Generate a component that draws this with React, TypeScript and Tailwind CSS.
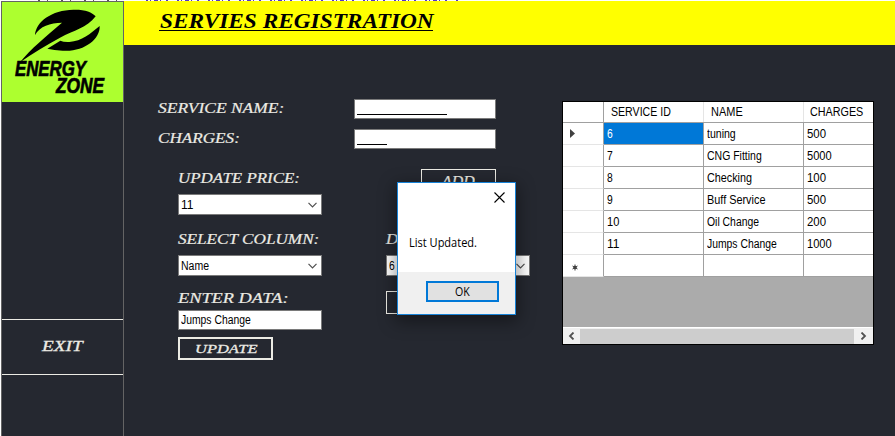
import { useLayoutEffect, useRef, type ReactNode } from "react";

/* Single line of text stretched horizontally to a fixed width. */
function Fit({ w, className = "", children }: { w: number; className?: string; children: ReactNode }) {
  const ref = useRef<HTMLSpanElement>(null);
  useLayoutEffect(() => {
    const el = ref.current;
    if (el) el.style.transform = `scaleX(${w / el.offsetWidth})`;
  }, [w]);
  return (
    <span className="block shrink-0" style={{ width: w }}>
      <span ref={ref} className={`block w-max origin-left whitespace-nowrap ${className}`}>
        {children}
      </span>
    </span>
  );
}

const serif = "font-['Liberation_Serif',serif] italic text-[14px] leading-[16px] text-[#ecebe4] [-webkit-text-stroke:0.2px_#ecebe4]";
const sans = "font-['Liberation_Sans',sans-serif] text-[12px] leading-[14px]";
const dialogFont = "font-['Open_Sans',sans-serif] text-[12px] leading-[16px] text-black";

function Chevron() {
  return (
    <svg className="mr-1 h-[6px] w-[9px]" viewBox="0 0 9 6" fill="none" stroke="#505050" strokeWidth="1.2">
      <path d="M0.5 0.8 4.5 4.8 8.5 0.8" />
    </svg>
  );
}

function Select({ value, w }: { value: string; w: number }) {
  return (
    <div className="flex h-[21px] w-[144px] items-center justify-between border border-[#7a7a7a] bg-white pl-[2px]">
      <Fit w={w} className={sans}>{value}</Fit>
      <Chevron />
    </div>
  );
}

const rows: [string, number, string, number, string, number][] = [
  ["6", 6, "tuning", 29, "500", 19],
  ["7", 6, "CNG Fitting", 55, "5000", 25],
  ["8", 6, "Checking", 45, "100", 19],
  ["9", 6, "Buff Service", 58, "500", 19],
  ["10", 12, "Oil Change", 52, "200", 19],
  ["11", 12, "Jumps Change", 70, "1000", 25],
];

function Logo() {
  return (
    <div className="relative h-[100px] bg-[#adff2f]">
      <svg className="absolute top-0 left-0 h-[100px] w-[121px]" viewBox="6 6 363 300">
        <path d="M105 105C108 65 155 30 220 29C254 28 276 36 287 49C260 84 222 91 180 113C139 135 98 160 60 187C91 147 139 109 186 68C150 69 120 78 105 105Z" />
        <path d="M299 78C301 119 249 157 188 152Q162 151 142 146L181 122Q191 127 208 126C246 123 271 101 299 78Z" />
      </svg>
      <div className="absolute top-[58px] left-[13px]">
        <Fit w={71} className="font-['Liberation_Sans',sans-serif] text-[22px] leading-[17px] font-bold italic [-webkit-text-stroke:0.7px_black]">ENERGY</Fit>
      </div>
      <div className="absolute top-[75px] left-[54px]">
        <Fit w={48} className="font-['Liberation_Sans',sans-serif] text-[22px] leading-[17px] font-bold italic [-webkit-text-stroke:0.7px_black]">ZONE</Fit>
      </div>
    </div>
  );
}

function Sidebar() {
  return (
    <aside className="flex w-[123px] shrink-0 flex-col border-x border-t border-[#646464]">
      <Logo />
      <div className="mt-[217px] flex h-[56px] items-center justify-center border-y border-[#ecebe4] pb-[2px]">
        <Fit w={41} className="font-['Liberation_Serif',serif] text-[15px] leading-[18px] italic text-[#ecebe4] [-webkit-text-stroke:0.3px_#ecebe4]">EXIT</Fit>
      </div>
    </aside>
  );
}

function Form() {
  return (
    <section className="w-[438px] pt-[54px] pl-[34px]">
      <div className="flex h-[20px] items-center">
        <div className="w-[196px]"><Fit w={126} className={serif}>SERVICE NAME:</Fit></div>
        <div className="flex h-[20px] w-[142px] items-end border border-[#7a7a7a] bg-white pb-[3px] pl-[2px]">
          <i className="h-px w-[90px] bg-black" />
        </div>
      </div>
      <div className="mt-[10px] flex h-[20px] items-center">
        <div className="w-[196px]"><Fit w={82} className={serif}>CHARGES:</Fit></div>
        <div className="flex h-[20px] w-[142px] items-end border border-[#7a7a7a] bg-white pb-[3px] pl-[2px]">
          <i className="h-px w-[30px] bg-black" />
        </div>
      </div>
      <div className="ml-[20px] flex">
        <div className="w-[208px] pt-[22px]">
          <Fit w={122} className={serif}>UPDATE PRICE:</Fit>
          <div className="mt-[7px]"><Select value="11" w={12} /></div>
          <div className="mt-[17px]"><Fit w={141} className={serif}>SELECT COLUMN:</Fit></div>
          <div className="mt-[7px]"><Select value="Name" w={28} /></div>
          <div className="mt-[15px]"><Fit w={110} className={serif}>ENTER DATA:</Fit></div>
          <div className="mt-[3px] flex h-[20px] w-[144px] items-center border border-[#7a7a7a] bg-white pl-[2px]">
            <Fit w={70} className={sans}>Jumps Change</Fit>
          </div>
          <div className="mt-[7px] flex h-[23px] w-[95px] items-center justify-center border-2 border-[#ecebe4]">
            <Fit w={62} className="font-['Liberation_Serif',serif] text-[13px] leading-[16px] italic text-[#ecebe4] [-webkit-text-stroke:0.3px_#ecebe4]">UPDATE</Fit>
          </div>
        </div>
        <div className="pt-[20px]">
          <div className="ml-[35px] flex h-[23px] w-[75px] items-center justify-center border border-[#ecebe4] pt-[2px]">
            <Fit w={33} className={serif}>ADD</Fit>
          </div>
          <div className="mt-[40px]"><Fit w={12} className={serif}>D</Fit></div>
          <div className="mt-[7px]"><Select value="6" w={6} /></div>
          <div className="mt-[15px] h-[23px] w-[95px] border border-[#ecebe4]" />
        </div>
      </div>
    </section>
  );
}

function DataGrid() {
  return (
    <section className="mt-[56px] flex h-[244px] w-[312px] flex-col border border-black bg-[#ababab]">
      <div className="flex h-[21px] border-b border-[#a0a0a0] bg-white">
        <div className="w-[41px] border-r border-[#a0a0a0]" />
        <div className="flex w-[100px] items-center border-r border-[#e5e5e5] pl-[7px]"><Fit w={60} className={sans}>SERVICE ID</Fit></div>
        <div className="flex w-[100px] items-center border-r border-[#e5e5e5] pl-[7px]"><Fit w={32} className={sans}>NAME</Fit></div>
        <div className="flex items-center pl-[6px]"><Fit w={53} className={sans}>CHARGES</Fit></div>
      </div>
      {rows.map(([id, iw, name, nw, charge, cw], i) => (
        <div key={id} className="flex h-[22px] bg-white">
          <div className="flex w-[41px] items-center border-r border-b border-r-[#a0a0a0] border-b-[#e5e5e5] pl-[7px]">
            {i === 0 && <svg className="h-[9px] w-[5px]" viewBox="0 0 5 9" fill="#404040"><path d="M0 0 5 4.5 0 9Z" /></svg>}
          </div>
          <div className={`flex w-[100px] items-center border-r border-b border-[#a0a0a0] pl-[3px] ${i === 0 ? "bg-[#0078d7] text-white" : ""}`}><Fit w={iw} className={sans}>{id}</Fit></div>
          <div className="flex w-[100px] items-center border-r border-b border-[#a0a0a0] pl-[3px]"><Fit w={nw} className={sans}>{name}</Fit></div>
          <div className="flex w-[69px] items-center border-b border-[#a0a0a0] pl-[3px]"><Fit w={cw} className={sans}>{charge}</Fit></div>
        </div>
      ))}
      <div className="flex h-[22px] bg-white">
        <div className="flex w-[41px] items-center border-r border-b border-r-[#a0a0a0] border-b-[#e5e5e5] pt-[3px] pl-[9px]">
          <svg className="h-[7px] w-[6px]" viewBox="0 0 6 7" fill="none" stroke="#404040"><circle cx="3" cy="3.5" r="1.7" fill="#404040" stroke="none" /><path d="M3 0.5V6.5M0.5 2 5.5 5M5.5 2 0.5 5" strokeWidth="1" /></svg>
        </div>
        <div className="w-[100px] border-r border-b border-[#a0a0a0]" />
        <div className="w-[100px] border-r border-b border-[#a0a0a0]" />
        <div className="w-[69px] border-b border-[#a0a0a0]" />
      </div>
      <div className="mt-auto flex h-[17px] items-center border-t border-white bg-[#f0f0f0]">
        <div className="flex w-[17px] justify-center">
          <svg className="h-[8px] w-[7px]" viewBox="0 0 7 8" fill="none" stroke="#505050" strokeWidth="1.8"><path d="M5.5 0.5 2 4 5.5 7.5" /></svg>
        </div>
        <div className="h-[15px] w-[274px] bg-[#cdcdcd]" />
        <div className="flex flex-1 justify-center">
          <svg className="h-[8px] w-[7px]" viewBox="0 0 7 8" fill="none" stroke="#505050" strokeWidth="1.8"><path d="M1.5 0.5 5 4 1.5 7.5" /></svg>
        </div>
      </div>
    </section>
  );
}

function MessageBox() {
  return (
    <div className="absolute top-[182px] left-[397px] flex h-[133px] w-[119px] flex-col border border-[#1883d7] bg-white shadow-[0_5px_16px_2px_rgba(0,0,0,0.4)]">
      <div className="flex justify-end pt-[9px] pr-[10px]">
        <svg className="h-[11px] w-[11px]" viewBox="0 0 11 11" fill="none" stroke="black" strokeWidth="1.1"><path d="M0.5 0.5 10.5 10.5M10.5 0.5 0.5 10.5" /></svg>
      </div>
      <div className="mt-[32px] pl-[11px]"><Fit w={68} className={dialogFont}>List Updated.</Fit></div>
      <div className="mt-auto flex h-[42px] items-start justify-end bg-[#f0f0f0] pt-[9px] pr-[16px]">
        <div className="flex h-[21px] w-[73px] items-center justify-center border-2 border-[#0078d7] bg-[#e1e1e1]">
          <Fit w={15} className={dialogFont}>OK</Fit>
        </div>
      </div>
    </div>
  );
}

export default function App() {
  return (
    <div className="relative h-[436px] w-[895px] overflow-hidden bg-white">
      <svg className="block h-px w-full" viewBox="0 0 895 1">
        <path d="M146 .5H460" stroke="#5532c8" strokeDasharray="2 2 1 3 4 2 1 5 2 9" />
        <path d="M38 .5H122" stroke="#555" strokeDasharray="2 7 1 13" />
      </svg>
      <div className="ml-px flex h-[435px] bg-[#252830]">
        <Sidebar />
        <main className="flex-1">
          <header className="h-[44px] bg-[#ffff00] pt-[11px] pl-[35px]">
            <div className="h-[19px] w-[274px] border-b border-black pl-px">
              <Fit w={274} className="font-['Liberation_Serif',serif] text-[20px] leading-[18px] font-bold italic">SERVIES REGISTRATION</Fit>
            </div>
          </header>
          <div className="flex">
            <Form />
            <DataGrid />
          </div>
        </main>
      </div>
      <MessageBox />
    </div>
  );
}
